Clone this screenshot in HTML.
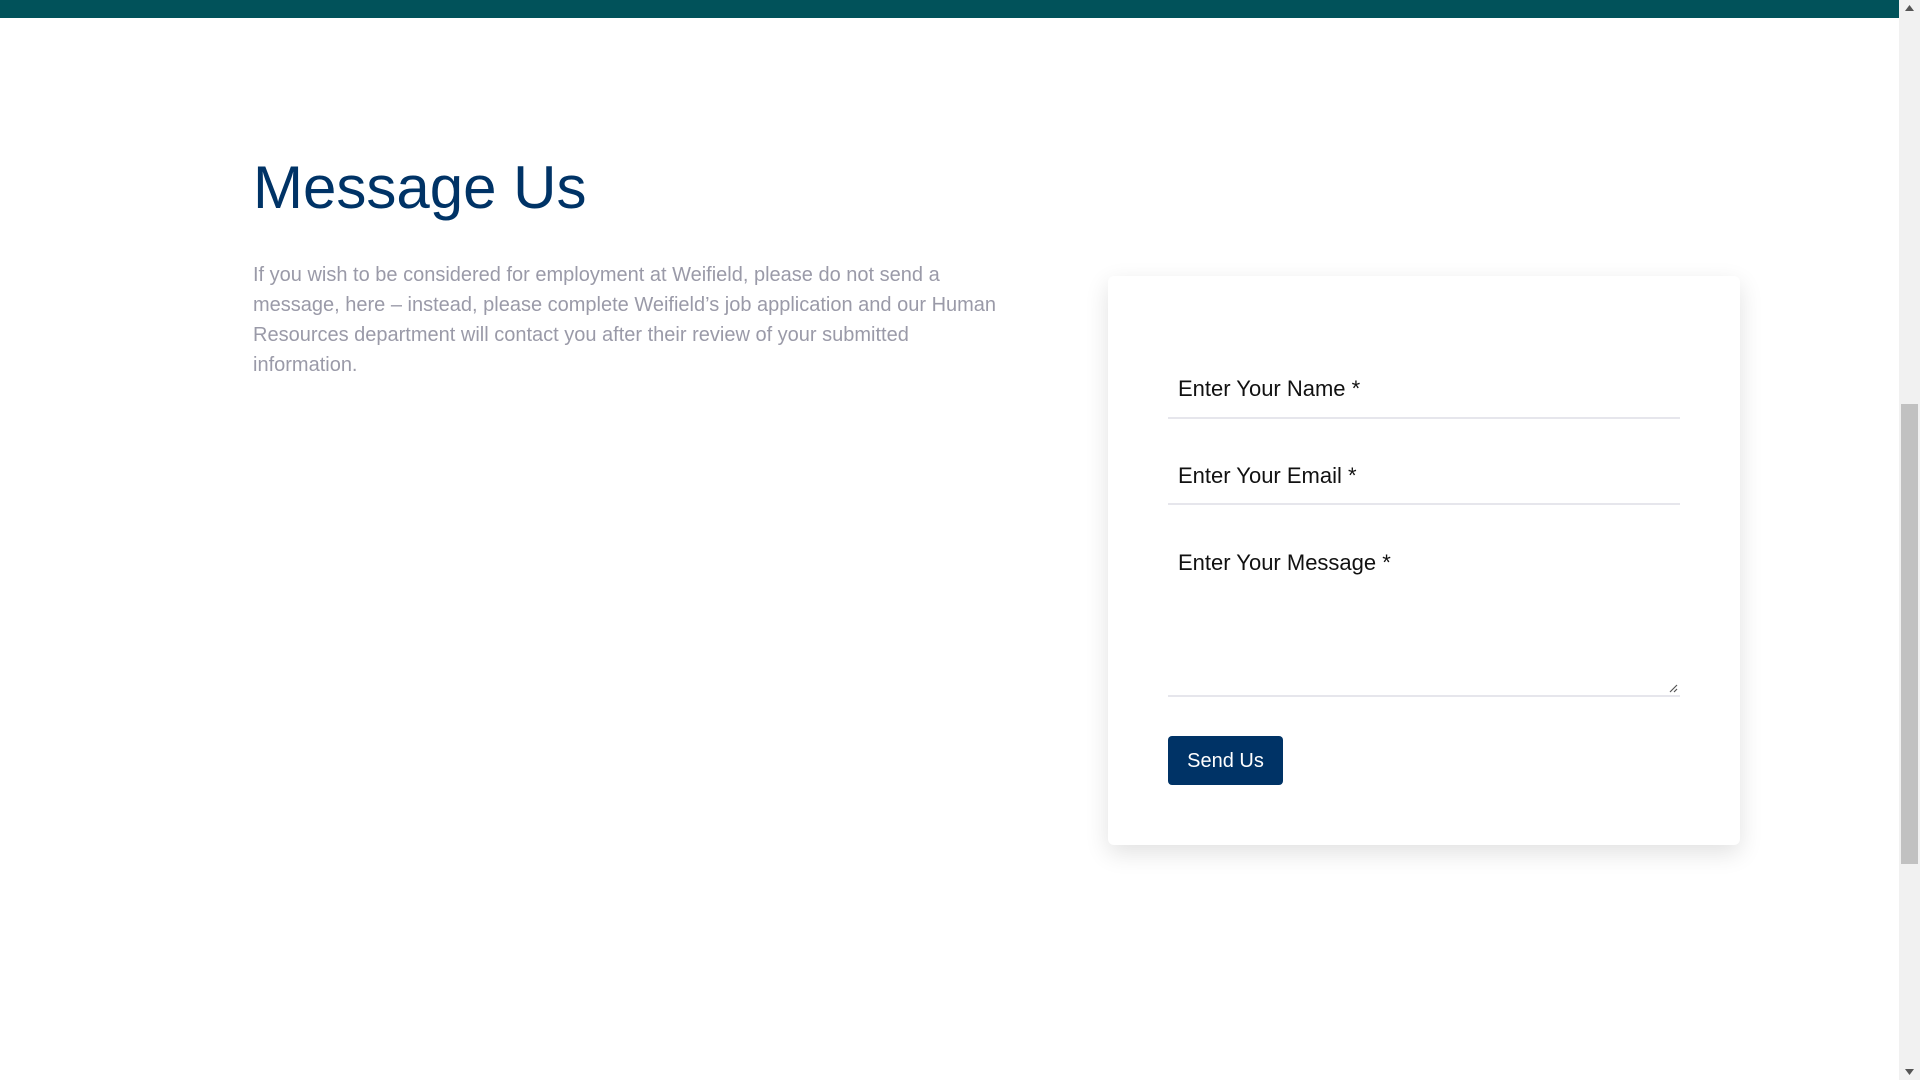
<!DOCTYPE html>
<html><head><meta charset="utf-8"><style>
html,body{margin:0;padding:0;width:1920px;height:1080px;overflow:hidden;background:#fff;font-family:"Liberation Sans",Arial,sans-serif;position:relative}
.top{position:absolute;left:0;top:0;width:1899px;height:18px;background:#01525a}
.sb{position:absolute;right:0;top:0;width:21px;height:1080px;background:#f1f1f1}
.thumb{position:absolute;right:2px;width:17px;top:404px;height:460px;background:#c1c1c1}
h1{position:absolute;left:253px;top:158px;margin:0;font-weight:normal;font-size:60px;line-height:60px;color:#003366}
p{position:absolute;left:253px;top:260px;margin:0;width:760px;font-size:20px;line-height:30px;color:#9a9aa8}
.card{position:absolute;left:1108px;top:276px;width:632px;height:569px;background:#fff;border-radius:6px;box-shadow:0 8px 24px rgba(0,0,0,.12)}
.f{position:absolute;left:1168px;width:512px;border-bottom:2px solid #e6e6ec;font-size:22px;color:#111}
.f span{position:absolute;left:10px}
.btn{position:absolute;left:1168px;top:736px;width:115px;height:49px;background:#003366;border-radius:4px;color:#fff;font-size:20px;line-height:50px;text-align:center}
</style></head><body>
<div class="top"></div>
<h1>Message Us</h1>
<p>If you wish to be considered for employment at Weifield, please do not send a message, here – instead, please complete Weifield’s job application and our Human Resources department will contact you after their review of your submitted information.</p>
<div class="card"></div>
<div class="f" style="top:360px;height:57px"><span style="top:16px">Enter Your Name *</span></div>
<div class="f" style="top:446px;height:57px"><span style="top:17px">Enter Your Email *</span></div>
<div class="f" style="top:533px;height:162px"><span style="top:17px">Enter Your Message *</span>
<svg style="position:absolute;right:2px;bottom:2px" width="10" height="10"><path d="M9 2L2 9M9 6L6 9" stroke="#555" stroke-width="1.2"/></svg></div>
<div class="btn">Send Us</div>
<div class="sb"><div class="thumb"></div>
<svg style="position:absolute;left:6px;top:5px" width="9" height="6"><path d="M0 6L4.5 0L9 6Z" fill="#555"/></svg>
<svg style="position:absolute;left:6px;bottom:5px" width="9" height="6"><path d="M0 0L4.5 6L9 0Z" fill="#555"/></svg></div>
</body></html>
